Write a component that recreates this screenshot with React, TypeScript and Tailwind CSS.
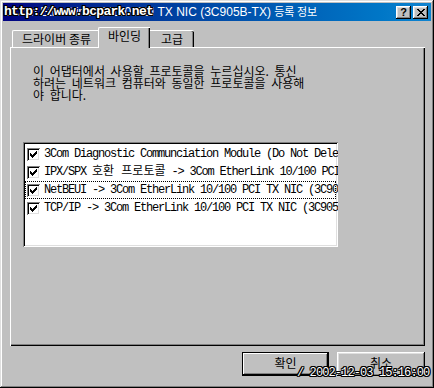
import React from "react";

const raised =
  "shadow-[inset_-1px_-1px_#000,inset_1px_1px_#fff,inset_-2px_-2px_#808080,inset_2px_2px_#dfdfdf]";

const CheckBox: React.FC = () => (
  <span className="w-[13px] h-[13px] shrink-0 bg-white shadow-[inset_1px_1px_#808080,inset_-1px_-1px_#fff,inset_2px_2px_#000,inset_-2px_-2px_#dfdfdf] flex items-center justify-center">
    <svg width="7" height="7" viewBox="0 0 7 7">
      <path d="M0 2h1v1h1v1h1v-1h1v-1h1v-1h1v-1h1v3h-1v1h-1v1h-1v1h-1v1h-1v-1h-1v-1h-1v-1h-1z" fill="#000" />
    </svg>
  </span>
);

const items: { text: React.ReactNode; focus?: boolean }[] = [
  { text: "3Com Diagnostic Communciation Module (Do Not Delete)" },
  {
    text: (
      <>
        IPX/SPX <span className="tracking-normal">호환 프로토콜</span> -&gt; 3Com
        EtherLink 10/100 PCI TX NIC (3C905B-TX)
      </>
    ),
  },
  { text: "NetBEUI -> 3Com EtherLink 10/100 PCI TX NIC (3C905B-TX)", focus: true },
  { text: "TCP/IP -> 3Com EtherLink 10/100 PCI TX NIC (3C905B-TX)" },
];

export default function App() {
  const kr = "font-['Noto_Sans_CJK_KR','Liberation_Sans',sans-serif]";
  const outline =
    "[text-shadow:1px_0_#000,-1px_0_#000,0_1px_#000,0_-1px_#000,1px_1px_#000,-1px_-1px_#000,1px_-1px_#000,-1px_1px_#000]";

  return (
    <div
      className={`relative w-[434px] h-[388px] bg-[#c0c0c0] pl-[3px] pr-[3px] pt-[3px] text-black ${kr} shadow-[inset_-1px_-1px_#000,inset_1px_1px_#dfdfdf,inset_-2px_-2px_#808080,inset_2px_2px_#fff]`}
    >
      {/* title bar */}
      <div className="relative h-[18px] flex items-center bg-gradient-to-r from-[#000080] to-[#1084d0] pl-[2px] pr-[3px] overflow-hidden">
        <span className="font-['Liberation_Sans',sans-serif] text-[12px] leading-none text-white whitespace-nowrap">
          3Com EtherLink 10/100 PCI TX NIC (3C905B-TX){" "}
          <span className={`${kr} text-[11px]`}>등록 정보</span>
        </span>
        <span
          className={`absolute left-[1px] top-[2px] font-['Liberation_Mono',monospace] font-bold text-[13px] leading-[14px] tracking-[-0.7px] text-white ${outline}`}
        >
          http://www.bcpark.net
        </span>
        <div className="ml-auto flex gap-[2px]">
          <span
            className={`w-[15px] h-[13px] bg-[#c0c0c0] ${raised} flex items-center justify-center font-['Liberation_Sans',sans-serif] font-bold text-[11px] leading-none`}
          >
            ?
          </span>
          <span className={`w-[15px] h-[13px] bg-[#c0c0c0] ${raised} flex items-center justify-center`}>
            <svg width="8" height="7" viewBox="0 0 8 7">
              <path d="M0 0h2v1h1v1h2v-1h1v-1h2v1h-1v1h-1v1h-1v1h1v1h1v1h1v1h-2v-1h-1v-1h-2v1h-1v1h-2v-1h1v-1h1v-1h1v-1h-1v-1h-1v-1h-1z" fill="#000" />
            </svg>
          </span>
        </div>
      </div>

      <div className="pl-[7px] pr-[6px]">
        {/* tabs */}
        <div className="mt-[7px] h-[19px] flex items-end pl-[2px] text-[12px] leading-none">
          <div className="w-[88px] h-[17px] flex items-center justify-center border-l border-t border-white rounded-tl-[2px] shadow-[inset_-1px_0_#000,inset_-2px_0_#808080] pb-[1px]">
            드라이버 종류
          </div>
          <div className="relative z-10 -mx-[2px] -mb-[1px] w-[52px] h-[21px] bg-[#c0c0c0] flex items-start justify-center pt-[2px] border-l border-t border-white rounded-tl-[2px] shadow-[inset_-1px_0_#000,inset_-2px_0_#808080]">
            바인딩
          </div>
          <div className="w-[46px] h-[17px] flex items-center justify-center pl-[2px] border-t border-white rounded-tr-[2px] shadow-[inset_-1px_0_#000,inset_-2px_0_#808080] pb-[1px]">
            고급
          </div>
        </div>

        {/* panel */}
        <div className="h-[299px] border-l border-t border-white shadow-[inset_-1px_-1px_#000,inset_-2px_-2px_#808080] pl-[12px] pt-[17px]">
          <p className="pl-[10px] text-[12px] leading-[12px] [word-spacing:3px]">
            이 어댑터에서 사용할 프로토콜을 누르십시오. 통신
            <br />
            하려는 네트워크 컴퓨터와 동일한 프로토콜을 사용해
            <br />
            야 합니다.
          </p>

          <div className="mt-[41px] w-[315px] h-[105px] bg-white shadow-[inset_1px_1px_#808080,inset_-1px_-1px_#fff,inset_2px_2px_#000,inset_-2px_-2px_#dfdfdf] p-[2px] pt-[3px] overflow-hidden">
            <div className="flex flex-col">
              {items.map((it, i) => (
                <div
                  key={i}
                  className={`h-[18px] flex items-center gap-[4px] pl-[1px] whitespace-nowrap border border-dotted ${
                    it.focus ? "border-black" : "border-transparent"
                  }`}
                >
                  <CheckBox />
                  <span className="font-['Liberation_Mono','Noto_Sans_CJK_KR',monospace] text-[12px] leading-none tracking-[-1.2px]">
                    {it.text}
                  </span>
                </div>
              ))}
            </div>
          </div>
        </div>

        {/* buttons */}
        <div className="mt-[6px] flex justify-end gap-[8px] text-[12px] leading-none">
          <button className="w-[87px] h-[24px] bg-[#c0c0c0] border border-black shadow-[inset_-1px_-1px_#000,inset_1px_1px_#fff,inset_-2px_-2px_#808080] flex items-center justify-center pb-[2px]">
            확인
          </button>
          <button className={`w-[88px] h-[24px] bg-[#c0c0c0] ${raised} flex items-center justify-center pb-[2px]`}>
            취소
          </button>
        </div>
      </div>

      {/* watermark */}
      <span
        className={`absolute left-[297px] top-[366px] font-['Liberation_Mono',monospace] text-[12px] leading-[14px] tracking-[-0.9px] text-white ${outline}`}
      >
        / 2002-12-03 15:16:00
      </span>
    </div>
  );
}
